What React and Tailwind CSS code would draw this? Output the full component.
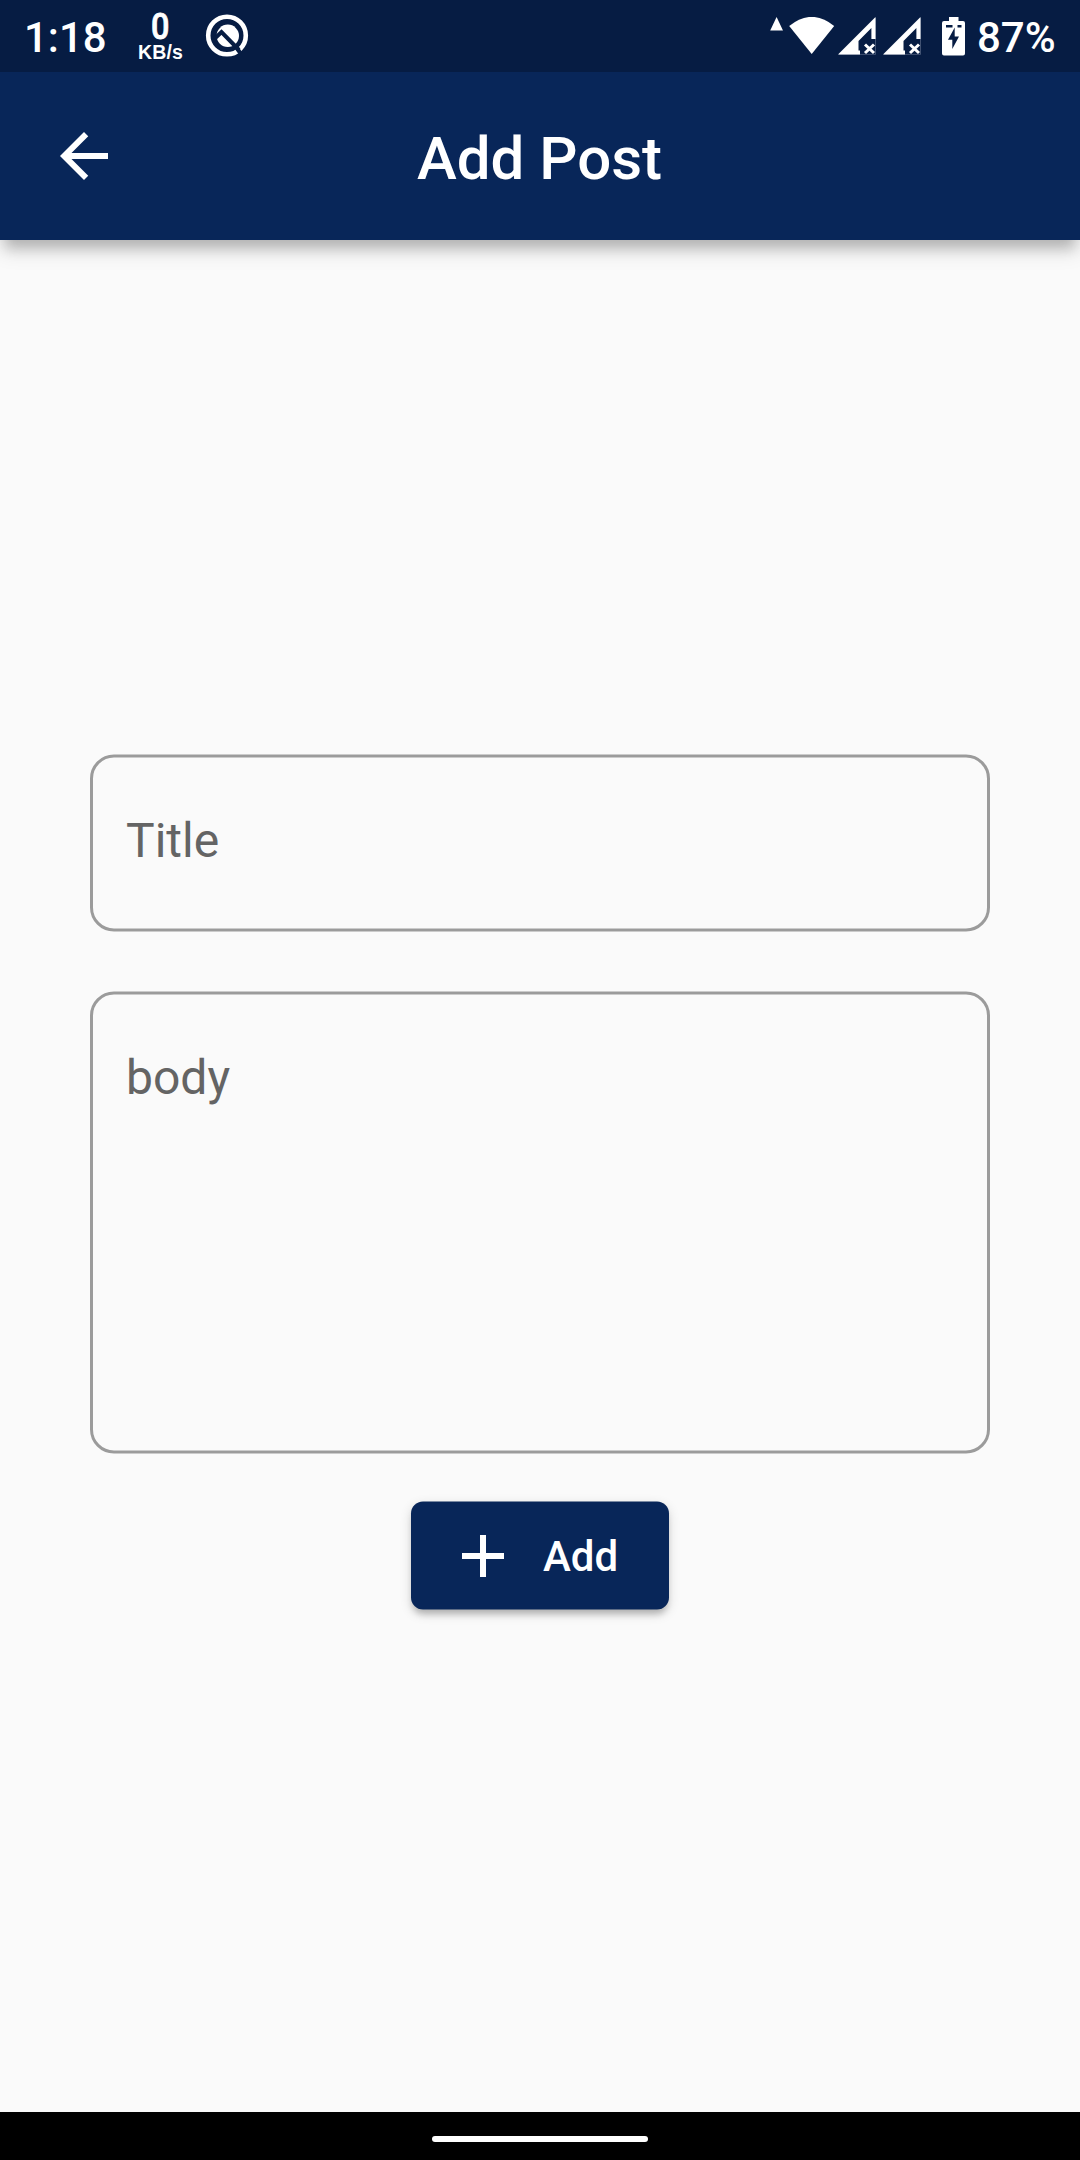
function TrafficMeter() {
  return (
    <div className="ml-[30px] flex h-[72px] w-[49px] flex-col items-center pt-[6px] text-white">
      <span className="h-[36px] scale-x-90 text-[36px] font-medium leading-[42px] [-webkit-text-stroke:0.8px_white]">0</span>
      <span className="h-[20px] whitespace-nowrap text-[19.5px] font-bold leading-[20px] tracking-[0.2px] font-['Liberation_Sans']">
        KB/s
      </span>
    </div>
  );
}

function CircleLogo() {
  return (
    <svg className="ml-[20px]" width="44" height="44" viewBox="0 0 44 44" fill="none">
      <circle cx="22" cy="21.5" r="18.8" stroke="white" strokeWidth="4.6" />
      <circle cx="22.8" cy="21.8" r="11.2" fill="white" />
      <path d="M9.5 24.8 L16.5 18 L34 36" stroke="#061c43" strokeWidth="4" />
      <path d="M31 33 L36 40" stroke="#061c43" strokeWidth="4" />
    </svg>
  );
}

function Signal() {
  return (
    <svg width="38" height="38" viewBox="0 0 38 38">
      <path d="M37.5 1 V37.4 H1" fill="none" stroke="#7c89a3" strokeWidth="0.5" />
      <path
        fill="white"
        d="M0 37.5 L37.5 0 V22 H33.4 V11 L20.5 24 V33.5 H22 V37.5 Z"
      />
      <path d="M27 27.5 L36 36 M36 27.5 L27 36" stroke="white" strokeWidth="3" />
    </svg>
  );
}

function StatusBar() {
  return (
    <div className="relative z-20 flex h-[72px] items-center bg-[#061c43] text-white">
      <span className="ml-[24px] w-[82px] pt-[4px] text-[42px] font-medium leading-[48px]">1:18</span>
      <TrafficMeter />
      <CircleLogo />
      <svg className="ml-auto" width="14" height="46" viewBox="0 0 14 46">
        <path d="M6.6 4 L13 17.5 H0.2 Z" fill="white" />
      </svg>
      <svg className="ml-[5px]" width="46" height="38" viewBox="0 0 46 38">
        <path d="M0.2 9 Q22.7 -9.3 45.2 9 L22.7 37 Z" fill="white" />
      </svg>
      <div className="ml-[3px] flex gap-[7px]">
        <Signal />
        <Signal />
      </div>
      <svg className="ml-[21px]" width="23" height="39" viewBox="0 0 23 39">
        <path
          fill="white"
          fillRule="evenodd"
          d="M7 0 H16.5 V4 H21 Q23 4 23 6 V36.5 Q23 38.5 21 38.5 H2 Q0 38.5 0 36.5 V6 Q0 4 2 4 H7 Z M12.7 10.5 L6 22.8 H10.3 V32 L17 19.5 H12.7 Z"
        />
        <path d="M4 8 H10.5 V10.5 H4 Z M15.5 8 H19.5 V10.5 H15.5 Z" fill="#061c43" />
      </svg>
      <span className="ml-[12px] w-[103px] pt-[4px] text-[42px] font-medium leading-[48px]">87%</span>
    </div>
  );
}

function AppBar() {
  return (
    <header className="relative z-10 flex h-[168px] items-center bg-[#082659] px-[48px] text-white shadow-[0_14px_12px_-6px_rgba(0,0,0,0.18),0_10px_20px_0_rgba(0,0,0,0.14)]">
      <svg width="72" height="72" viewBox="0 0 24 24" fill="white">
        <path d="M20 11H7.83l5.59-5.59L12 4l-8 8 8 8 1.41-1.41L7.83 13H20v-2z" />
      </svg>
      <h1 className="mr-[73px] flex-1 pt-[6px] text-center text-[60px] font-medium leading-[72px]">Add Post</h1>
    </header>
  );
}

const outline =
  "relative before:pointer-events-none before:absolute before:inset-0 before:translate-y-[0.5px] before:rounded-[24px] before:border-[3px] before:border-[#9b9b9b] before:content-['']";

export default function App() {
  return (
    <div className="flex h-[2160px] w-[1080px] flex-col bg-[#fafafa] font-[Roboto,sans-serif]">
      <StatusBar />
      <AppBar />
      <main className="flex flex-1 flex-col items-center pt-[514px]">
        <div className={`${outline} h-[177px] w-[900px]`}>
          <input
            placeholder="Title"
            className="block h-full w-full bg-transparent px-[36px] pb-[4px] text-[48px] leading-[56px] outline-none placeholder:text-[#646464]"
          />
        </div>
        <div className={`${outline} mt-[60px] h-[462px] w-[900px]`}>
          <textarea
            placeholder="body"
            className="block h-full w-full resize-none bg-transparent px-[36px] pt-[58px] text-[48px] leading-[57px] outline-none placeholder:text-[#646464]"
          />
        </div>
        <button className="relative mt-[48px] flex h-[108px] w-[258px] items-center pl-[36px] pt-[2px] text-white before:absolute before:inset-0 before:translate-y-[0.5px] before:rounded-[12px] before:bg-[#082659] before:shadow-[0_6px_6px_-2px_rgba(0,0,0,0.2),0_4px_12px_0_rgba(0,0,0,0.14)] before:content-['']">
          <svg className="relative" width="72" height="72" viewBox="0 0 24 24" fill="white">
            <path d="M19 13h-6v6h-2v-6H5v-2h6V5h2v6h6v2z" />
          </svg>
          <span className="relative ml-[24px] pt-[2px] text-[42px] font-medium leading-[48px]">Add</span>
        </button>
      </main>
      <footer className="flex h-[48px] justify-center bg-black pt-[24px]">
        <div className="h-[6px] w-[216px] rounded-full bg-white" />
      </footer>
    </div>
  );
}
